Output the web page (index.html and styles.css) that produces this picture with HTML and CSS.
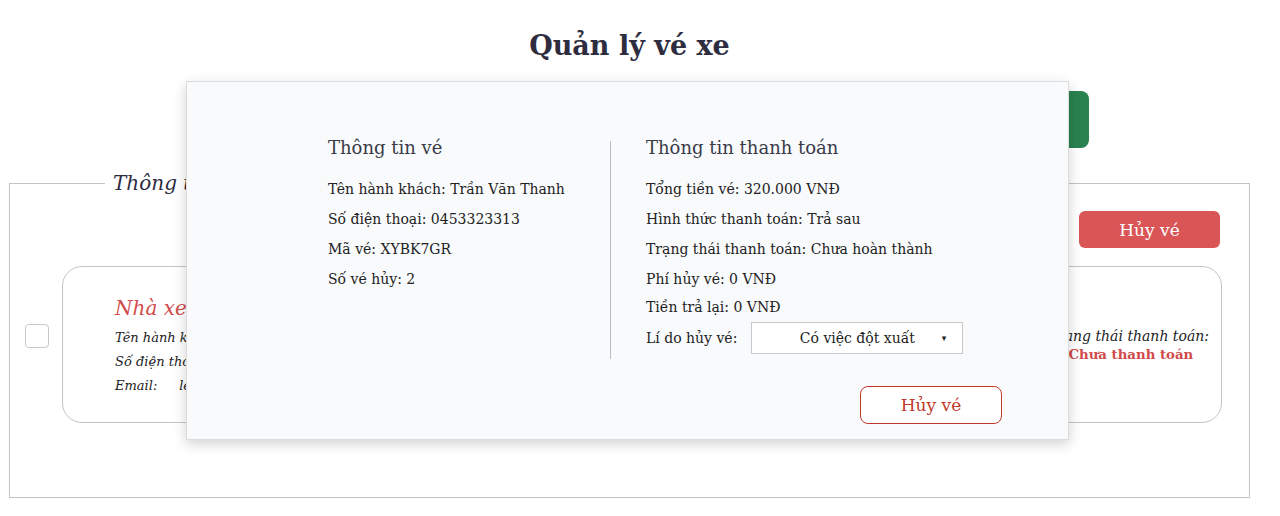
FILE: index.html
```html
<!DOCTYPE html>
<html lang="vi">
<head>
  <meta charset="UTF-8">
  <meta name="viewport" content="width=device-width, initial-scale=1.0">
  <title>Quản lý vé xe</title>
  <link rel="stylesheet" href="styles.css">
</head>
<body>
<div class="page">
  <h1 class="page-title">Quản lý vé xe</h1>

  <div class="toolbar">
    <button type="button" class="btn-green">Tìm kiếm</button>
  </div>

  <fieldset class="ticket-box">
    <legend>Thông tin vé đã đặt</legend>

    <div class="actions">
      <button type="button" class="btn-red">Hủy vé</button>
    </div>

    <div class="ticket-row">
      <span class="check"></span>
      <div class="ticket-card">
        <div class="ticket-info">
          <div class="company">Nhà xe Phương Trang</div>
          <div class="info-line">Tên hành khách: Trần Văn Thanh</div>
          <div class="info-line">Số điện thoại: 0453323313</div>
          <div class="info-line"><span class="email-label">Email:</span> lethanh@gmail.com</div>
        </div>
        <div class="ticket-status">
          <div class="status-label">Trạng thái thanh toán:</div>
          <div class="status-red">Chưa thanh toán</div>
        </div>
      </div>
    </div>
  </fieldset>
</div>

<div class="modal">
  <div class="modal-body">
    <div class="col col-left">
      <h2>Thông tin vé</h2>
      <p>Tên hành khách: Trần Văn Thanh</p>
      <p>Số điện thoại: 0453323313</p>
      <p>Mã vé: XYBK7GR</p>
      <p>Số vé hủy: 2</p>
    </div>
    <div class="col col-right">
      <h2>Thông tin thanh toán</h2>
      <p>Tổng tiền vé: 320.000 VNĐ</p>
      <p>Hình thức thanh toán: Trả sau</p>
      <p>Trạng thái thanh toán: Chưa hoàn thành</p>
      <p>Phí hủy vé: 0 VNĐ</p>
      <p class="short">Tiền trả lại: 0 VNĐ</p>
      <div class="reason">
        <span>Lí do hủy vé:</span>
        <div class="select">Có việc đột xuất <span class="caret">&#9662;</span></div>
      </div>
    </div>
  </div>
  <div class="modal-footer">
    <button type="button" class="btn-outline">Hủy vé</button>
  </div>
</div>
</body>
</html>
```

FILE: styles.css
```css
body {
  margin: 0;
  background-color: #FFFFFF;
  color: #222222;
  font-family: "DejaVu Serif", serif;
  position: relative;
  height: 516px;
  overflow: hidden;
}
.page {
  width: 1241px;
  margin-left: 9px;
}
.page-title {
  margin: 0;
  padding-top: 28px;
  height: 64px;
  box-sizing: border-box;
  text-align: center;
  font-size: 27px;
  font-weight: bold;
  color: #2E2C3F;
  line-height: 36px;
}
.toolbar {
  display: flex;
  justify-content: flex-end;
  padding: 27px 161px 0 0;
  height: 57px;
}
.btn-green {
  width: 160px;
  height: 57px;
  border: none;
  border-radius: 8px;
  background-color: #2A8250;
  color: #FFFFFF;
  font-family: inherit;
  font-size: 18px;
}
.ticket-box {
  margin: 23px 0 0 0;
  padding: 0 28px 0 15px;
  height: 327px;
  box-sizing: border-box;
  border: 1px solid #C4C4C4;
}
.ticket-box legend {
  margin-left: 80px;
  padding: 0 8px;
  font-style: italic;
  font-size: 20px;
  color: #2E2C3F;
}
.actions {
  display: flex;
  justify-content: flex-end;
  padding-top: 16px;
  padding-right: 1px;
}
.btn-red {
  width: 141px;
  height: 37px;
  border: none;
  border-radius: 6px;
  background-color: #DA5656;
  color: #FFFFFF;
  font-family: inherit;
  font-size: 17px;
}
.ticket-row {
  display: flex;
  gap: 13px;
  margin-top: 18px;
  margin-right: -1px;
}
.check {
  width: 22px;
  height: 22px;
  margin-top: 58px;
  border: 1px solid #C8C8C8;
  border-radius: 4px;
  flex: none;
}
.ticket-card {
  flex: 1;
  height: 157px;
  box-sizing: border-box;
  border: 1px solid #C4C4C4;
  border-radius: 20px;
  display: flex;
  justify-content: space-between;
  align-items: center;
  padding: 0 12px 0 52px;
}
.ticket-info {
  font-style: italic;
}
.company {
  color: #D14B4B;
  font-size: 20px;
  line-height: 32px;
  margin-bottom: 2px;
}
.info-line {
  font-size: 13px;
  line-height: 24px;
  font-style: italic;
}
.email-label {
  display: inline-block;
  width: 60px;
}
.ticket-status {
  text-align: center;
  margin-bottom: 3px;
}
.status-label {
  font-size: 14px;
  line-height: 24px;
  font-style: italic;
}
.status-red {
  color: #D14B4B;
  font-weight: bold;
  font-size: 13.3px;
  line-height: 14px;
  padding-left: 4px;
}

.modal {
  position: absolute;
  left: 186px;
  top: 81px;
  width: 883px;
  height: 359px;
  box-sizing: border-box;
  background-color: #F9FAFC;
  border: 1px solid #DCDCDC;
  box-shadow: 0 4px 12px rgba(0, 0, 0, 0.18);
  padding: 59px 66px 0 141px;
}
.modal-body {
  display: flex;
}
.col h2 {
  margin: 0 0 19px 0;
  font-size: 18px;
  font-weight: normal;
  line-height: 14px;
  color: #3A3A48;
}
.col p {
  margin: 0;
  font-size: 14px;
  line-height: 30px;
  color: #222222;
}
.col p.short {
  line-height: 26px;
}
.col-left {
  width: 283px;
  border-right: 1px solid #BDBDBD;
  box-sizing: border-box;
}
.col-right {
  padding-left: 35px;
  padding-bottom: 5px;
}
.reason {
  display: flex;
  align-items: center;
  gap: 14px;
  font-size: 14px;
  margin-top: 2px;
}
.select {
  width: 212px;
  height: 32px;
  box-sizing: border-box;
  border: 1px solid #C8C8C8;
  background-color: #FFFFFF;
  display: flex;
  align-items: center;
  justify-content: center;
  position: relative;
}
.caret {
  position: absolute;
  right: 16px;
  font-size: 9px;
}
.modal-footer {
  display: flex;
  justify-content: flex-end;
  margin-top: 27px;
}
.btn-outline {
  width: 142px;
  height: 38px;
  background-color: #FFFFFF;
  border: 1px solid #C0392B;
  border-radius: 8px;
  color: #C0392B;
  font-family: inherit;
  font-size: 17px;
}
```
